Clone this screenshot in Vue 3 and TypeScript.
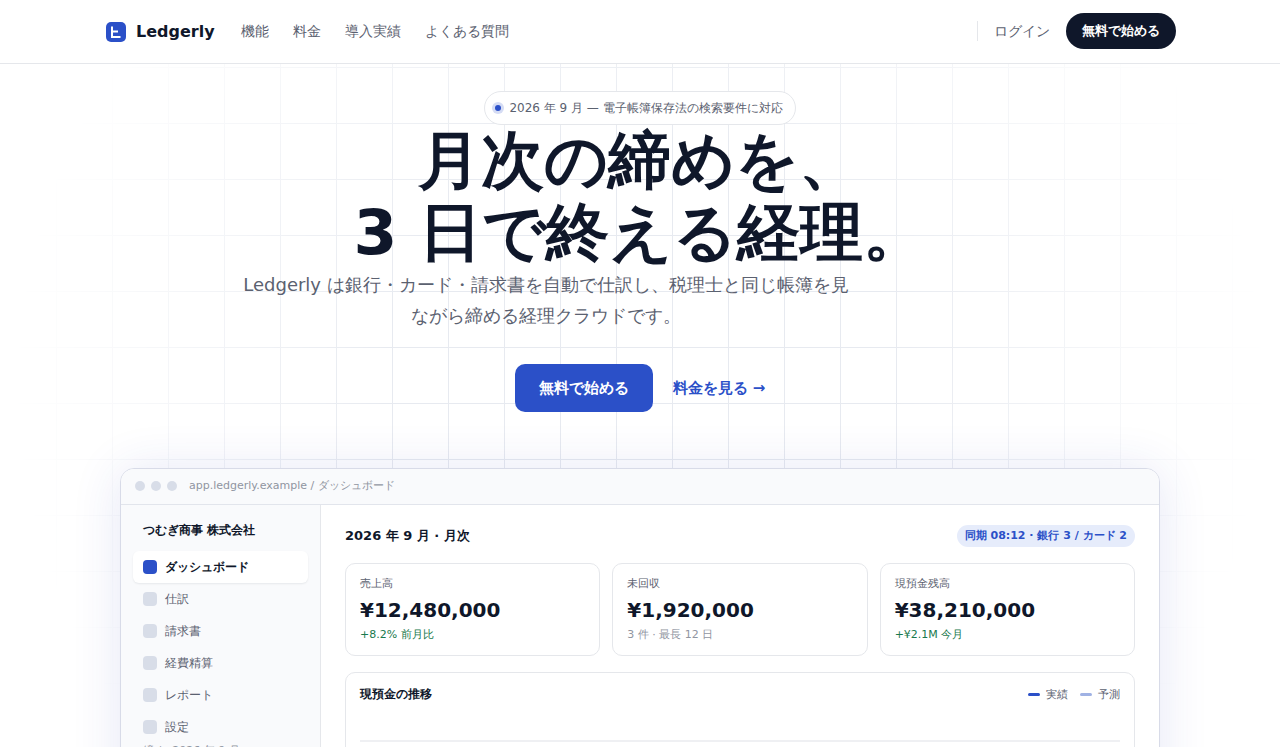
<script setup lang="ts">
interface Stat {
  label: string
  value: string
  note: string
  up: boolean
}

const navLinks: string[] = ['機能', '料金', '導入実績', 'よくある質問']
const menu: string[] = ['ダッシュボード', '仕訳', '請求書', '経費精算', 'レポート', '設定']
const stats: Stat[] = [
  { label: '売上高', value: '¥12,480,000', note: '+8.2% 前月比', up: true },
  { label: '未回収', value: '¥1,920,000', note: '3 件 · 最長 12 日', up: false },
  { label: '現預金残高', value: '¥38,210,000', note: '+¥2.1M 今月', up: true },
]
</script>

<template>
  <div class="page">
    <header class="site-header">
      <div class="header-inner">
        <a class="brand" href="#">
          <svg class="logo" viewBox="0 0 20 20" aria-hidden="true">
            <rect width="20" height="20" rx="5" fill="#2b50c8" />
            <path d="M6 4.5V15h8.5M6 9.5h6" fill="none" stroke="#fff" stroke-width="2" />
          </svg>
          <span>Ledgerly</span>
        </a>
        <nav class="nav">
          <a v-for="link in navLinks" :key="link" href="#">{{ link }}</a>
        </nav>
        <div class="actions">
          <a class="login" href="#">ログイン</a>
          <button class="cta-small" type="button">無料で始める</button>
        </div>
      </div>
    </header>

    <main class="hero">
      <div class="grid-lines" aria-hidden="true"></div>
      <section class="intro">
        <p class="pill"><span class="pulse"></span>2026 年 9 月 — 電子帳簿保存法の検索要件に対応</p>
        <h1>月次の締めを、<br />3 日で終える経理。</h1>
        <p class="lead">Ledgerly は銀行・カード・請求書を自動で仕訳し、税理士と同じ帳簿を見ながら締める経理クラウドです。</p>
        <div class="cta-row">
          <button class="cta" type="button">無料で始める</button>
          <a class="price-link" href="#">料金を見る →</a>
        </div>
      </section>

      <section class="window">
        <div class="titlebar">
          <span class="lights"><i></i><i></i><i></i></span>
          <span>app.ledgerly.example / ダッシュボード</span>
        </div>
        <div class="window-body">
          <aside class="sidebar">
            <strong class="company">つむぎ商事 株式会社</strong>
            <nav class="menu">
              <a v-for="(item, i) in menu" :key="item" href="#" :class="{ active: i === 0 }">
                <span class="square"></span>{{ item }}
              </a>
            </nav>
            <p class="closing">締め: 2026 年 9 月</p>
          </aside>
          <div class="content">
            <div class="content-head">
              <h2>2026 年 9 月 · 月次</h2>
              <span class="sync">同期 08:12 · 銀行 3 / カード 2</span>
            </div>
            <div class="stats">
              <article v-for="s in stats" :key="s.label" class="stat">
                <span class="label">{{ s.label }}</span>
                <strong>{{ s.value }}</strong>
                <span class="note" :class="{ up: s.up }">{{ s.note }}</span>
              </article>
            </div>
            <article class="chart">
              <div class="chart-head">
                <h3>現預金の推移</h3>
                <div class="legend">
                  <span><i></i>実績</span>
                  <span class="forecast"><i></i>予測</span>
                </div>
              </div>
              <svg class="plot" viewBox="0 0 760 160" preserveAspectRatio="none" aria-hidden="true">
                <path d="M0 22h760M0 72h760M0 122h760" stroke="#eff0f3" stroke-width="2" />
              </svg>
            </article>
          </div>
        </div>
      </section>
    </main>
  </div>
</template>

<style>
body {
  margin: 0;
}
</style>

<style scoped>
* {
  box-sizing: border-box;
}

.page {
  height: 100vh;
  overflow: hidden;
  background: #fff;
  color: #0f172a;
  font-family: "DejaVu Sans", sans-serif;
}

a {
  color: inherit;
  text-decoration: none;
}

button {
  border: 0;
  font-family: inherit;
  font-weight: 600;
  color: #fff;
  cursor: pointer;
}

h1,
h2,
h3,
p {
  margin: 0;
}

.site-header {
  background: #fff;
  border-bottom: 1px solid #e5e7eb;
}

.header-inner {
  display: flex;
  align-items: center;
  max-width: 1120px;
  height: 63px;
  margin: 0 auto;
  padding: 0 24px 0 26px;
}

.brand {
  display: flex;
  align-items: center;
  gap: 10px;
  font-size: 16px;
  font-weight: 700;
}

.logo {
  width: 20px;
  height: 20px;
}

.nav {
  display: flex;
  gap: 24px;
  margin-left: 26px;
  font-size: 14px;
  color: #5b6170;
}

.actions {
  display: flex;
  align-items: center;
  gap: 16px;
  margin-left: auto;
  padding-bottom: 2px;
}

.login {
  padding-left: 16px;
  border-left: 1px solid #e5e7eb;
  font-size: 14px;
  line-height: 20px;
  color: #5b6170;
}

.cta-small {
  height: 36px;
  padding: 0 16px;
  border-radius: 18px;
  background: #0f172a;
  font-size: 13px;
}

.hero {
  position: relative;
  padding: 27px 24px 0;
}

.grid-lines {
  position: absolute;
  inset: 0;
  background-image:
    linear-gradient(to right, #e7eaf0 1px, transparent 1px),
    linear-gradient(to bottom, #e7eaf0 1px, transparent 1px);
  background-size: 56px 56px;
  background-position: 0 3px;
  mask-image: radial-gradient(ellipse 630px 600px at 50% 320px, #000 40%, transparent 100%);
}

.intro {
  position: relative;
  max-width: 800px;
  margin: 0 auto;
  text-align: center;
}

.pill {
  display: flex;
  align-items: center;
  gap: 8px;
  width: fit-content;
  height: 34px;
  margin: 0 auto;
  padding: 0 12px 0 10px;
  border: 1px solid #e5e7eb;
  border-radius: 17px;
  background: #fff;
  font-size: 12px;
  color: #5b6170;
}

.pulse {
  width: 6px;
  height: 6px;
  border-radius: 50%;
  background: #2b50c8;
  box-shadow: 0 0 0 3px #d5dcf4;
}

h1 {
  font-size: 63px;
  line-height: 72px;
  font-weight: 700;
}

.lead {
  max-width: 612px;
  font-size: 18px;
  line-height: 31px;
  color: #5b6170;
}

.cta-row {
  display: flex;
  justify-content: center;
  align-items: center;
  gap: 20px;
  margin-top: 33px;
  font-size: 15px;
}

.cta {
  height: 48px;
  padding: 0 24px;
  border-radius: 10px;
  background: #2b50c8;
  font-size: 15px;
}

.price-link {
  font-weight: 600;
  color: #2b50c8;
}

.window {
  position: relative;
  max-width: 1040px;
  margin: 56px auto 0;
  border: 1px solid #d8dbe8;
  border-radius: 14px;
  overflow: hidden;
  background: #fff;
  box-shadow: 0 2px 50px rgba(43, 60, 180, 0.12);
}

.titlebar {
  display: flex;
  align-items: center;
  gap: 12px;
  height: 36px;
  padding: 0 14px 2px;
  border-bottom: 1px solid #e2e5ec;
  background: #f9fafc;
  font-size: 11px;
  color: #9095a1;
}

.lights {
  display: flex;
  gap: 6px;
}

.lights i {
  width: 10px;
  height: 10px;
  border-radius: 50%;
  background: #d8dde8;
}

.window-body {
  display: grid;
  grid-template-columns: 200px minmax(0, 1fr);
}

.sidebar {
  padding: 16px 12px;
  border-right: 1px solid #e5e7eb;
  background: #f9fafc;
  font-size: 12px;
}

.company {
  display: block;
  padding: 0 10px;
  line-height: 18px;
}

.menu {
  display: flex;
  flex-direction: column;
  margin-top: 12px;
  color: #5b6170;
}

.menu a {
  display: flex;
  align-items: center;
  gap: 8px;
  height: 32px;
  padding: 0 10px;
  border-radius: 6px;
}

.menu .active {
  background: #fff;
  font-weight: 600;
  color: #0f172a;
  box-shadow: 0 1px 2px rgba(15, 23, 42, 0.08);
}

.square {
  width: 14px;
  height: 14px;
  border-radius: 4px;
  background: #d8dde8;
}

.active .square {
  background: #2b50c8;
}

.closing {
  padding: 0 10px;
  font-size: 11px;
  line-height: 16px;
  color: #9095a1;
}

.content {
  padding: 20px 24px;
}

.content-head {
  display: flex;
  justify-content: space-between;
  align-items: center;
}

h2 {
  font-size: 13px;
}

.sync {
  height: 22px;
  padding: 0 8px;
  border-radius: 11px;
  background: #e6ecfb;
  font-size: 11px;
  font-weight: 600;
  line-height: 22px;
  color: #2b50c8;
}

.stats {
  display: grid;
  grid-template-columns: repeat(3, minmax(0, 1fr));
  gap: 12px;
  margin-top: 16px;
}

.stat {
  display: flex;
  flex-direction: column;
  padding: 12px 14px;
  border: 1px solid #e5e7eb;
  border-radius: 10px;
}

.label,
.note {
  font-size: 11px;
  line-height: 16px;
  color: #5b6170;
}

.stat strong {
  margin: 4px 0 3px;
  font-size: 20px;
  line-height: 28px;
}

.note {
  color: #9095a1;
}

.note.up {
  color: #18794e;
}

.chart {
  margin-top: 16px;
  padding: 12px 14px;
  border: 1px solid #e5e7eb;
  border-radius: 10px;
}

.chart-head {
  display: flex;
  justify-content: space-between;
  align-items: center;
}

h3 {
  font-size: 12px;
  line-height: 18px;
}

.legend {
  display: flex;
  gap: 12px;
  font-size: 11px;
  color: #5b6170;
}

.legend span {
  display: flex;
  align-items: center;
  gap: 6px;
}

.legend i {
  width: 12px;
  height: 3px;
  border-radius: 2px;
  background: #2b50c8;
}

.legend .forecast i {
  background: #a0b2e4;
}

.plot {
  display: block;
  width: 100%;
  height: 160px;
  margin-top: 16px;
}
</style>
